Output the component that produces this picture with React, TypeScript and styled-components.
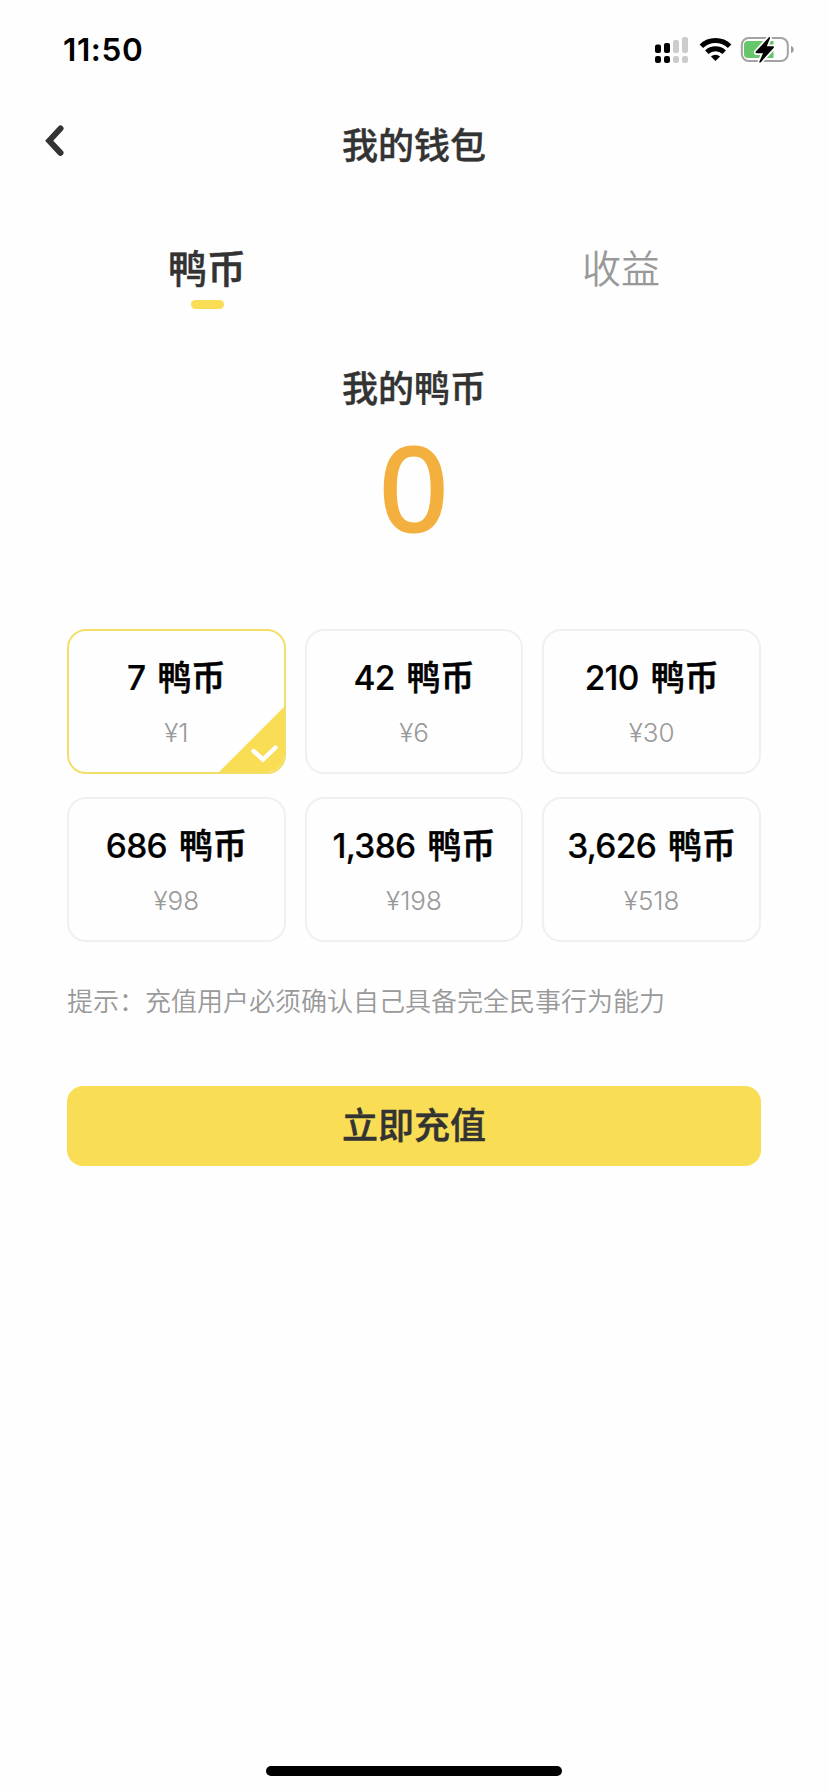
import React, { useState } from "react";
import styled, { createGlobalStyle } from "styled-components";

const GlobalStyle = createGlobalStyle`
  * { box-sizing: border-box; }
  body {
    margin: 0;
    background: #fefefe;
    color: #333;
    font-family: Inter, "Noto Sans CJK SC", sans-serif;
  }
  button { font: inherit; color: inherit; border: 0; background: none; padding: 0; }
`;

const Screen = styled.div`
  display: flex;
  flex-direction: column;
  width: 828px;
  height: 1792px;
`;

const StatusBar = styled.div`
  display: flex;
  justify-content: space-between;
  height: 88px;
  padding: 30px 33px 0 63px;
`;

const Time = styled.span`
  font-size: 31.5px;
  line-height: 40px;
  font-weight: 600;
  letter-spacing: 0.6px;
  color: #000;
`;

const Indicators = styled.svg`
  width: 140px;
  height: 40px;
`;

const NavBar = styled.header`
  display: grid;
  grid-template-columns: 110px 1fr 110px;
  height: 114px;
  padding-top: 20px;
`;

const BackButton = styled.button`
  display: flex;
  width: 40px;
  height: 40px;
  margin: 12px 0 0 36px;
`;

const Title = styled.h1`
  margin: 0;
  padding-top: 1px;
  font-size: 36px;
  line-height: 74px;
  font-weight: 500;
  text-align: center;
  -webkit-text-stroke: 0.4px currentColor;
`;

const Tabs = styled.nav`
  display: grid;
  grid-template-columns: 1fr 1fr;
  height: 138px;
  padding-top: 39px;
`;

const Tab = styled.button<{ $active: boolean }>`
  display: flex;
  flex-direction: column;
  align-items: center;
  gap: 3px;
  font-size: 39px;
  line-height: 56px;
  font-weight: ${(p) => (p.$active ? 500 : 350)};
  color: ${(p) => (p.$active ? "#333" : "#999")};
  -webkit-text-stroke: ${(p) => (p.$active ? "0.5px currentColor" : "0")};

  &::after {
    content: "";
    width: 33px;
    height: 9px;
    border-radius: 5px;
    background: ${(p) => (p.$active ? "#f8dd55" : "transparent")};
  }
`;

const Balance = styled.section`
  display: flex;
  flex-direction: column;
  align-items: center;
  height: 289px;
  padding-top: 23px;
`;

const BalanceLabel = styled.h2`
  margin: 0;
  font-size: 36px;
  line-height: 52px;
  font-weight: 500;
  -webkit-text-stroke: 0.4px currentColor;
`;

const Amount = styled.div`
  margin-top: 12px;
  font-family: "Open Sans", sans-serif;
  font-size: 115px;
  line-height: 120px;
  font-weight: 400;
  color: #f3b03f;
  -webkit-text-stroke: 3px currentColor;
  transform: scaleX(1.05);
`;

const Packages = styled.div`
  display: grid;
  grid-template-columns: repeat(3, 1fr);
  grid-auto-rows: 145px;
  gap: 23px 19px;
  padding: 0 67px;
`;

const PackageCard = styled.button<{ $selected: boolean }>`
  position: relative;
  display: flex;
  flex-direction: column;
  align-items: center;
  padding-top: 23px;
  border: 2px solid ${(p) => (p.$selected ? "#f1df68" : "#f0f0f0")};
  border-radius: 19px;
  overflow: hidden;
`;

const Coins = styled.span`
  display: flex;
  align-items: baseline;
  gap: 12px;
  font-size: 34px;
  line-height: 48px;
  font-weight: 500;
  color: #000;
`;

const Count = styled.span`
  font-size: 33.5px;
  letter-spacing: -0.7px;
  -webkit-text-stroke: 0.2px currentColor;
`;

const Unit = styled.span`
  -webkit-text-stroke: 0.6px currentColor;
`;

const Price = styled.span`
  margin-top: 12px;
  font-size: 26px;
  line-height: 38px;
  font-weight: 300;
  color: #999;
`;

const SelectedMark = styled.svg`
  position: absolute;
  right: -2px;
  bottom: -2px;
  width: 69px;
  height: 69px;
`;

const Hint = styled.p`
  margin: 40px 67px 0;
  font-size: 26px;
  line-height: 40px;
  font-weight: 350;
  color: #999;
`;

const PayButton = styled.button`
  height: 80px;
  margin: 64px 67px 0;
  border-radius: 16px;
  padding-top: 0;
  background: #f8dd55;
  font-size: 36px;
  line-height: 80px;
  font-weight: 500;
  -webkit-text-stroke: 0.4px currentColor;
`;

const HomeIndicator = styled.div`
  width: 296px;
  height: 10px;
  margin: auto auto 16px;
  border-radius: 5px;
  background: #000;
`;

const packages = [
  { coins: "7", price: 1 },
  { coins: "42", price: 6 },
  { coins: "210", price: 30 },
  { coins: "686", price: 98 },
  { coins: "1,386", price: 198 },
  { coins: "3,626", price: 518 },
];

const StatusIcons = () => (
  <Indicators viewBox="655 30 140 40">
    <g>
      <rect x="655" y="44.5" width="6" height="8.5" rx="2" />
      <rect x="664" y="43" width="6" height="10" rx="2" />
      <rect x="655" y="56" width="6" height="7" rx="2.2" />
      <rect x="664" y="56" width="6" height="7" rx="2.2" />
    </g>
    <g fill="#ccc">
      <rect x="673" y="40" width="6" height="13" rx="2" />
      <rect x="682" y="37" width="6" height="16" rx="2" />
      <rect x="673" y="56" width="6" height="7" rx="2.2" />
      <rect x="682" y="56" width="6" height="7" rx="2.2" />
    </g>
    <g fill="none" stroke="#000" strokeWidth="5">
      <path d="M701.4 46.2a20.3 20.3 0 0 1 28.2 0" />
      <path d="M706.8 52.2a12.6 12.6 0 0 1 17.4 0" />
    </g>
    <path d="M715.5 61l-4.6-4.5a6.8 6.8 0 0 1 9.2 0z" />
    <rect x="741.8" y="38" width="46" height="23" rx="7" fill="#fff" stroke="#a3a3a3" strokeWidth="2" />
    <path d="M748 41h25.5v17H748a4 4 0 0 1-4-4v-9a4 4 0 0 1 4-4z" fill="#66c66a" />
    <path d="M791 46c3.6 1 3.6 6 0 7z" fill="#999" />
    <path
      d="M769 37.2l-13.2 14.4q-.8 1.6 1 1.6h6.2l-3.8 8.8q.4 1.2 1.6.2l13-14.4q.6-1.6-1-1.6h-6l3.4-8.4q-.2-1.2-1.2-.6z"
      fill="#000"
      stroke="#fff"
      strokeWidth="3.4"
      paintOrder="stroke"
      strokeLinejoin="round"
    />
  </Indicators>
);

export default function App() {
  const [tab, setTab] = useState(0);
  const [selected, setSelected] = useState(0);

  return (
    <Screen>
      <GlobalStyle />
      <StatusBar>
        <Time>11:50</Time>
        <StatusIcons />
      </StatusBar>
      <NavBar>
        <BackButton aria-label="返回">
          <svg width="40" height="40" viewBox="36 120 40 40" fill="none" stroke="#333" strokeWidth="6" strokeLinecap="round" strokeLinejoin="miter">
            <path d="M60.5 128.5L49.2 140.7l11.3 12.2" />
          </svg>
        </BackButton>
        <Title>我的钱包</Title>
      </NavBar>
      <Tabs>
        {["鸭币", "收益"].map((label, i) => (
          <Tab key={label} $active={tab === i} onClick={() => setTab(i)}>
            {label}
          </Tab>
        ))}
      </Tabs>
      <Balance>
        <BalanceLabel>我的鸭币</BalanceLabel>
        <Amount>0</Amount>
      </Balance>
      <Packages>
        {packages.map((p, i) => (
          <PackageCard key={p.coins} $selected={selected === i} onClick={() => setSelected(i)}>
            <Coins>
              <Count>{p.coins}</Count>
              <Unit>鸭币</Unit>
            </Coins>
            <Price>¥{p.price}</Price>
            {selected === i && (
              <SelectedMark viewBox="0 0 69 69">
                <path d="M69 0v69H0z" fill="#f8dd55" />
                <path d="M36.5 46l9.5 8.5L58.5 42.5" fill="none" stroke="#fff" strokeWidth="4.4" strokeLinecap="round" />
              </SelectedMark>
            )}
          </PackageCard>
        ))}
      </Packages>
      <Hint>提示：充值用户必须确认自己具备完全民事行为能力</Hint>
      <PayButton>立即充值</PayButton>
      <HomeIndicator />
    </Screen>
  );
}
